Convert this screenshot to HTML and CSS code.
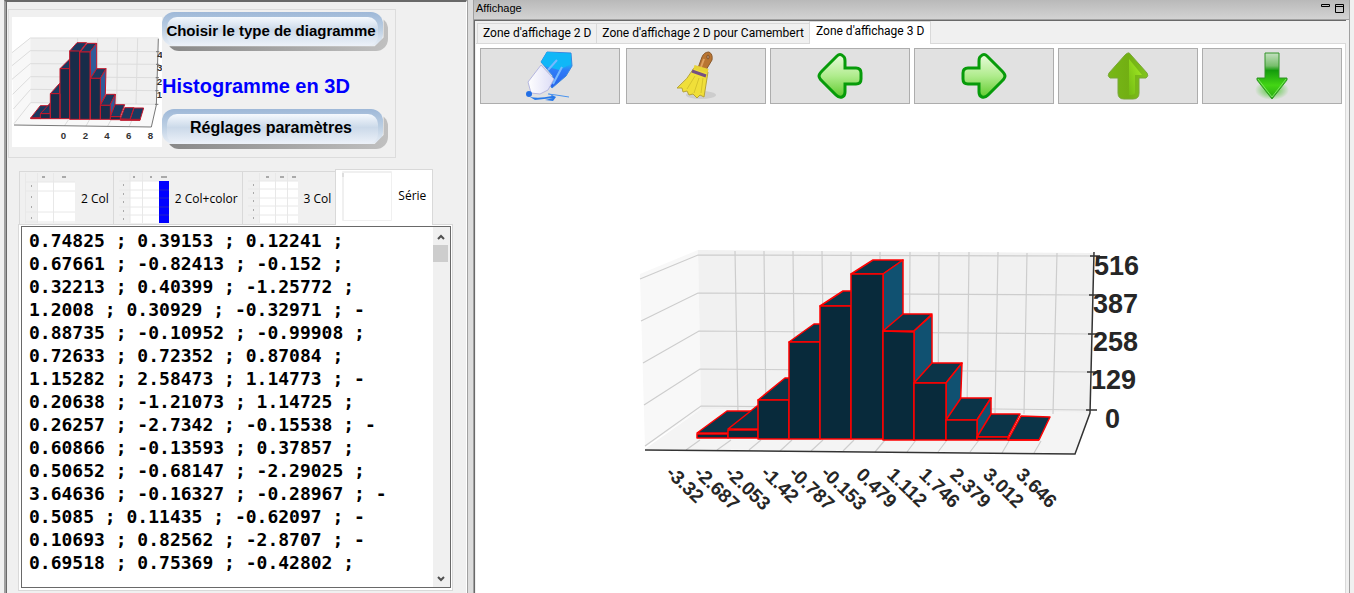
FILE: index.html
```html
<!DOCTYPE html>
<html lang="fr">
<head>
<meta charset="utf-8">
<title>Diagrammes</title>
<link rel="stylesheet" href="styles.css">
</head>
<body>
<div class="app">
  <aside class="side">
    <section class="chooser">
      <svg class="thumb" viewBox="36 51 450 390" aria-hidden="true">
        <rect x="36" y="51" width="450" height="390" fill="#fff"/>
        <path d="M36 158L91 114L92 310L42 374Z" fill="#f8f8f8"/>
        <path d="M91 114L475 117L469 315L92 310Z" fill="#f0f0f0"/>
        <path d="M92 310L469 315L454 380L42 374Z" fill="#f8f8f8"/>
        <path d="M36 158L91 114H475M36 197L91 152L474 155M36 238L91 191L473 193M38 283L92 230L471 233M40 327L92 268L470 272M42 371L92 308L469 313M233 115V310M293 115V310M353 115L350 310M413 115L408 312M205 360L193 378M268 360L258 378M333 360L323 378M396 360L388 378" fill="none" stroke="#ddd" stroke-width="3"/>
        <path d="M42 375L454 381L469 315L475 116M468 155H478M468 193H478M467 233H477M466 272H476M465 313H475" fill="none" stroke="#777" stroke-width="3"/>
        <g stroke="#c4182c" stroke-width="3" stroke-linejoin="round" fill="#1b395f">
          <path d="M92 354L121 317H150L122 354Z"/><path d="M121 341L150 310V341Z"/><path d="M151 281L179 250V281Z"/><path d="M180 206L209 177V206Z"/><path d="M209 153L231 128H260L239 155Z"/><path d="M240 156L262 130H290L270 156Z"/>
          <path d="M270 156L290 130V206L272 235Z" fill="#315b99"/>
          <path d="M272 235L290 206H318L301 235Z"/>
          <path d="M301 235L318 206L316 283L301 316Z" fill="#315b99"/>
          <path d="M301 316L319 283H346L330 316Z"/>
          <path d="M330 316L346 283L345 314L331 350Z" fill="#315b99"/>
          <path d="M331 350L345 314H374L360 350ZM361 357L374 323H402L390 358ZM390 359L402 324H431L420 360Z"/>
          <path d="M92 354H122V356H92ZM121 341H151V356H121ZM151 281H180V356H151ZM180 206H209V356H180ZM209 153H239V358H209ZM239 156H270V358H239ZM271 235H301V358H271ZM301 316H331V358H301ZM331 350H361V359H331ZM361 358H420V361H361Z" fill="#182c49"/>
        </g>
        <g class="thumb-text"><text x="182" y="417">0</text><text x="248" y="417">2</text><text x="313" y="417">4</text><text x="378" y="417">6</text><text x="443" y="417">8</text><text x="472" y="174">4</text><text x="471" y="214">3</text><text x="470" y="254">2</text><text x="470" y="293">1</text></g>
      </svg>
      <div class="choices">
        <button class="gloss" type="button">Choisir le type de diagramme</button>
        <h1>Histogramme en 3D</h1>
        <button class="gloss large" type="button">Réglages paramètres</button>
      </div>
    </section>

    <section class="data">
      <div class="data-tabs" role="tablist">
        <button class="data-tab" type="button" role="tab">
          <svg width="50" height="50" viewBox="0 0 50 50" aria-hidden="true"><path fill="#f0f0f0" d="M0 0h50v50H0z"/><path fill="#fff" d="M13 9h37v41H13z"/><path d="M0 9h50M0 18h50M0 39h50M0 49h50M12.500 0v50M28.500 0v50M.5 0v50" stroke="#e8e8e8"/><path d="M17 4h3M37 4h4M6 13h1M6 24h1M6 34h1M6 45h1" stroke="#aaa" stroke-width="2"/></svg>
          <span>2 Col</span></button>
        <button class="data-tab" type="button" role="tab">
          <svg width="50" height="50" viewBox="0 0 50 50" aria-hidden="true"><path fill="#f0f0f0" d="M0 0h50v50H0z"/><path fill="#fff" d="M11 8h30v42H11z"/><path fill="#00f" d="M40 8h10v42H40z"/><path d="M0 8h40M0 17h40M0 25h40M0 34h40M0 42h40M11 0v50M23.500 0v50" stroke="#e8e8e8"/><path d="M40 17h10M40 25h10M40 34h10M40 42h10" stroke="#22c"/><path d="M14 4h2M31 4h2M42 4h6M4 12h1M4 21h1M4 29h1M4 38h1M4 46h1" stroke="#aaa" stroke-width="2"/></svg>
          <span>2 Col+color</span></button>
        <button class="data-tab" type="button" role="tab">
          <svg width="50" height="50" viewBox="0 0 50 50" aria-hidden="true"><path fill="#f0f0f0" d="M0 0h50v50H0z"/><path fill="#fff" d="M12 8h38v42H12z"/><path d="M0 8h50M0 16h50M0 25h50M0 33h50M0 42h50M11.500 0v50M27.500 0v50M39.500 0v50" stroke="#e8e8e8"/><path d="M18 4h3M32 4h4M44 4h4M5 12h1M5 20h1M5 28h1M5 37h1M5 45h1" stroke="#aaa" stroke-width="2"/></svg>
          <span>3 Col</span></button>
        <button class="data-tab active" type="button" role="tab" aria-selected="true">
          <svg width="50" height="50" viewBox="0 0 50 50" aria-hidden="true"><path d="M.5.500h49v49H.5zM1 1.500h48M1.500 1v48" fill="#fff" stroke="#f0f0f0"/><path d="M1 2v4" stroke="#ccc"/></svg>
          <span>Série</span></button>
      </div>
      <div class="data-pane">
        <div class="editor">
          <textarea aria-label="Série" spellcheck="false" wrap="off">0.74825 ; 0.39153 ; 0.12241 ;
0.67661 ; -0.82413 ; -0.152 ;
0.32213 ; 0.40399 ; -1.25772 ;
1.2008 ; 0.30929 ; -0.32971 ; -
0.88735 ; -0.10952 ; -0.99908 ;
0.72633 ; 0.72352 ; 0.87084 ;
1.15282 ; 2.58473 ; 1.14773 ; -
0.20638 ; -1.21073 ; 1.14725 ;
0.26257 ; -2.7342 ; -0.15538 ; -
0.60866 ; -0.13593 ; 0.37857 ;
0.50652 ; -0.68147 ; -2.29025 ;
3.64636 ; -0.16327 ; -0.28967 ; -
0.5085 ; 0.11435 ; -0.62097 ; -
0.10693 ; 0.82562 ; -2.8707 ; -
0.69518 ; 0.75369 ; -0.42802 ;</textarea>
          <div class="scroll" aria-hidden="true">
            <svg width="16" height="18" viewBox="0 0 16 18"><path d="M5 12L8 9L11 12" fill="none" stroke="#505050" stroke-width="2"/></svg>
            <div class="scroll-thumb"></div>
            <svg class="scroll-end" width="16" height="17" viewBox="0 0 16 17"><path d="M5 7L8 10L11 7" fill="none" stroke="#505050" stroke-width="2"/></svg>
          </div>
        </div>
      </div>
    </section>
  </aside>

  <div class="splitter"></div>

  <main class="display">
    <header class="titlebar">
      <span>Affichage</span>
      <svg width="23" height="9" viewBox="0 0 23 9" aria-hidden="true"><path d="M.5.500h8v2h-8zM14.500.500h8v8h-8zM14.500 2.500h8" fill="none" stroke="#000"/></svg>
    </header>
    <div class="view">
      <div class="view-tabs" role="tablist">
        <button class="view-tab" type="button" role="tab">Zone d'affichage 2 D</button>
        <button class="view-tab" type="button" role="tab">Zone d'affichage 2 D pour Camembert</button>
        <button class="view-tab active" type="button" role="tab" aria-selected="true">Zone d'affichage 3 D</button>
      </div>
      <div class="view-pane">
        <div class="tools">
          <button class="tool first" type="button" aria-label="Dessiner">
            <svg width="50" height="52" viewBox="0 0 50 52"><defs><linearGradient id="pen" x1="0" y1="0" x2="0" y2="1"><stop offset="0" stop-color="#09b8fa"/><stop offset=".3" stop-color="#12bdf9"/><stop offset=".5" stop-color="#2f7df8"/><stop offset="1" stop-color="#2860ea"/></linearGradient><linearGradient id="nib"><stop offset="0" stop-color="#fff"/><stop offset="1" stop-color="#dcdcf6"/></linearGradient></defs>
            <path d="M22 2L46 3L47 16L41 26L27 38L24 34L28 26L16 12Z" fill="url(#pen)" stroke="#3988df"/><path d="M16 12L22 2L46 4L46 14L34 20L20 16Z" fill="#10b7f7"/><path d="M37 17L28 34M32 10L23 20" stroke="#76b9ff" stroke-width="2"/><path d="M16 15L29 29L23 40L15 44L6 43L3 32Z" fill="url(#nib)" stroke="#b4b6e0"/><circle cx="4" cy="44" r="3" fill="#216ee5"/><path d="M5 47Q14 49 27 46L23 43L31 47L28 51L20 50L28 48L10 50Z" fill="#2879e8"/><path d="M23 44L31 45L44 47" fill="none" stroke="#4a94ee"/></svg>
          </button>
          <button class="tool" type="button" aria-label="Effacer">
            <svg width="42" height="50" viewBox="0 0 42 50"><ellipse cx="26" cy="44" rx="15" ry="4" fill="#cdcdcd"/><path d="M27 6Q29 1 34 1Q38 3 37 9L31 19L23 17Z" fill="#b97532" stroke="#8a5a2d"/><path d="M29 8L26 16" stroke="#dfa15f" stroke-width="2"/><ellipse cx="33" cy="6" rx="1" ry="2" fill="#e9d9c7" stroke="#76441b"/><path d="M19 17L33 21L29 46L25 44L22 47L18 43L14 44L12 40L8 41L7 37L2 37Q13 28 19 17Z" fill="#f0df39" stroke="#b8a535"/><path d="M20 25L12 38M24 27L19 42M28 27L26 42" stroke="#d6c42d" stroke-width="1"/><path d="M17 20L31 25" stroke="#765083" stroke-width="3"/><path d="M19 16L33 20" stroke="#e7d336" stroke-width="4"/></svg>
          </button>
          <button class="tool" type="button" aria-label="Gauche">
            <svg width="46" height="46" viewBox="0 0 46 46"><defs><linearGradient id="leaf" x1="0" y1="0" x2="0" y2="1"><stop offset="0" stop-color="#e9fbdc"/><stop offset=".5" stop-color="#b0ec8d"/><stop offset="1" stop-color="#60cb2d"/></linearGradient></defs><path id="arrow" d="M2 23Q2 21 5 18L20 3Q23 0 26 3Q28 4 28 8V15H39Q44 15 44 20V26Q44 31 39 31H28V39Q28 43 25 44Q22 45 19 42L5 28Q2 25 2 23Z" fill="url(#leaf)" stroke="#079b0a" stroke-width="3"/></svg>
          </button>
          <button class="tool" type="button" aria-label="Droite">
            <svg width="46" height="46" viewBox="0 0 46 46"><use href="#arrow" transform="matrix(-1 0 0 1 46 0)"/></svg>
          </button>
          <button class="tool" type="button" aria-label="Haut">
            <svg width="42" height="48" viewBox="0 0 42 48"><defs><linearGradient id="up"><stop offset="0" stop-color="#78b817"/><stop offset=".5" stop-color="#72af13"/><stop offset="1" stop-color="#81c51d"/></linearGradient><linearGradient id="shine" x1="0" y1="1" x2="1" y2="0"><stop offset="0" stop-color="#73bb12"/><stop offset="1" stop-color="#a6ed25"/></linearGradient></defs><path d="M21 1Q22 0 24 3L40 21Q42 24 39 26H32V41Q32 47 26 47H17Q11 47 11 41V26H3Q0 24 2 21L18 3Q20 1 21 1Z" fill="url(#up)" stroke="#79a738"/><path d="M22 7L35 23H28V41Q27 43 22 43Z" fill="url(#shine)"/></svg>
          </button>
          <button class="tool" type="button" aria-label="Bas">
            <svg width="34" height="48" viewBox="0 0 34 48"><defs><linearGradient id="down" x1="0" y1="0" x2="0" y2="1"><stop offset="0" stop-color="#c4e0c0"/><stop offset=".28" stop-color="#77be6b"/><stop offset=".38" stop-color="#149b0c"/><stop offset=".7" stop-color="#43d514"/><stop offset="1" stop-color="#25a711"/></linearGradient><radialGradient id="glow"><stop offset="0" stop-color="#48c52d"/><stop offset="1" stop-color="#e1e1e1"/></radialGradient></defs><ellipse cx="17" cy="38" rx="17" ry="10" fill="url(#glow)"/><path d="M10 1H24V26H32V28L17 47L2 28V26H10Z" fill="url(#down)" stroke="#329428"/><path d="M3 27L17 45L31 27" fill="none" stroke="#7ce461"/></svg>
          </button>
        </div>
        <svg class="chart" viewBox="480 104 862 480" role="img" aria-label="Histogramme en 3D">
          <path d="M640 274L698 250L701 409L645 447Z" fill="#f8f8f8"/>
          <path d="M698 250L1094 253L1090 413L701 409Z" fill="#f1f1f1"/>
          <path d="M701 409L1090 413L1075 453L645 449Z" fill="#f4f4f4"/>
          <g fill="none" stroke="#cdcdcd" stroke-width="1.200">
            <path d="M640 279L698 255L1094 256M641 321L698 293L1093 295M643 363L699 331L1092 334M644 405L700 369L1091 372M645 446L701 406L1090 410"/>
            <path d="M735 251L738 413M764 251L766 413M793 251L795 413M822 251L824 413M851 252V413M880 252V413M910 252L909 413M939 252L938 413M969 252L967 413M998 252L995 413M1027 253L1024 414M1057 253L1053 414"/>
            <path d="M700 440L686 450M731 440L717 450M761 440L749 450M792 440L780 451M823 440L811 451M854 440L843 451M885 440L875 452M916 440L907 452M947 440L938 452M979 440L970 452M1009 441L1002 453M1041 441L1034 453"/>
          </g>
          <path d="M645 450L1075 454L1090 413L1094 252M1090 256H1100M1089 295H1099M1088 334H1098M1087 372H1098M1086 410H1097" fill="none" stroke="#333" stroke-width="1.500"/>
          <g class="bars">
            <path class="top" d="M697 433L727 411H757L728 433Z"/><path class="front" d="M697 434H728V438H697Z"/>
            <path class="top" d="M728 429L757 406H787L758 429Z"/><path class="front" d="M728 430H758V438H728Z"/>
            <path class="top" d="M758 400L785 378H815L789 400Z"/><path class="front" d="M758 400H789V439H758Z"/>
            <path class="top" d="M789 342L814 324H844L820 342Z"/><path class="front" d="M789 342H820V439H789Z"/>
            <path class="top" d="M820 306L843 291H873L851 306Z"/><path class="front" d="M820 306H851V439H820Z"/>
            <path class="top" d="M851 274L873 260H903L883 274Z"/><path class="right" d="M883 274L903 260V416L883 439Z"/><path class="front" d="M851 274H883V439H851Z"/>
            <path class="top" d="M883 331L903 314H932L914 331Z"/><path class="right" d="M914 331L932 315V416L914 440Z"/><path class="front" d="M883 331L914 332V440H883Z"/>
            <path class="top" d="M914 383L932 363H962L946 383Z"/><path class="right" d="M946 383L962 363L960 416L946 440Z"/><path class="front" d="M914 383H946V440H914Z"/>
            <path class="top" d="M946 420L961 398H991L977 420Z"/><path class="right" d="M977 420L991 398V415L977 439Z"/><path class="front" d="M946 420H977V440H946Z"/>
            <path class="top" d="M977 437L991 414H1020L1008 437Z"/><path class="front" d="M977 437H1008V440H977Z"/>
            <path class="top" d="M1008 440L1021 416L1050 417L1039 440Z"/><path class="front" d="M1008 440H1039"/>
          </g>
          <g class="axis-y"><text x="1094" y="275">516</text><text x="1093" y="313">387</text><text x="1093" y="351">258</text><text x="1091" y="389">129</text><text x="1105" y="428">0</text></g>
          <g class="axis-x">
            <text transform="translate(665 474) rotate(44)">-3.32</text>
            <text transform="translate(693 474) rotate(44)">-2.687</text>
            <text transform="translate(724 474) rotate(44)">-2.053</text>
            <text transform="translate(760 474) rotate(44)">-1.42</text>
            <text transform="translate(788 474) rotate(44)">-0.787</text>
            <text transform="translate(820 474) rotate(44)">-0.153</text>
            <text transform="translate(855 476) rotate(44)">0.479</text>
            <text transform="translate(886 476) rotate(44)">1.112</text>
            <text transform="translate(918 476) rotate(44)">1.746</text>
            <text transform="translate(949 476) rotate(44)">2.379</text>
            <text transform="translate(982 476) rotate(44)">3.012</text>
            <text transform="translate(1015 476) rotate(44)">3.646</text>
          </g>
        </svg>
      </div>
    </div>
  </main>
</div>
</body>
</html>
```
FILE: styles.css
```css
* { box-sizing: border-box; }
body { margin: 0; background: #f0f0f0; color: #000; font-family: "Open Sans", "Noto Sans", sans-serif; font-size: 12px; }
button { margin: 0; padding: 0; font: inherit; color: inherit; }
svg { display: block; flex: none; }
.app { display: flex; min-height: 100vh; padding: 0 4px; }

.side { flex: 0 0 463px; display: flex; flex-direction: column; border-left: 2px solid #a0a0a0; border-right: 1px solid #fff; padding: 7px 13px 2px 0; border-top: 2px solid #696969; box-shadow: inset 1px 0 #696969; }
.chooser { display: flex; width: 388px; height: 149px; margin-left: 2px; padding: 2px 3px; border: 1px solid #dcdcdc; }
.thumb { width: 150px; height: 130px; margin-top: 5px; }
.thumb-text text { font: bold 29px "Liberation Sans Narrow", "Liberation Sans", sans-serif; fill: #333; }
.choices { display: flex; flex-direction: column; align-items: flex-start; }
h1 { margin: 27px 0 10px; font: bold 20px/26px "Liberation Sans", Arial, sans-serif; color: #00f; white-space: nowrap; }
.gloss { position: relative; z-index: 0; width: 221px; height: 34px; padding: 2px 3px 0 0; border: 0; border-radius: 12px; background: linear-gradient(#9eb8d8, #bccfe3 50%, #e8eef6); font: bold 15px "Liberation Sans", Arial, sans-serif; white-space: nowrap; }
.gloss.large { height: 35px; padding: 3px 3px 0 0; font-size: 16px; }
.gloss::before { content: ""; position: absolute; z-index: -1; inset: 5px 5px 0; border-radius: 10px; background: linear-gradient(#f5f9fe, #cbd9e9 45%, #edf2f9); }
.gloss::after { content: ""; position: absolute; z-index: -3; inset: 5px -5px -5px 5px; border-radius: 12px; background: linear-gradient(90deg, #888, #c0c0c0); clip-path: polygon(0 86%, 94% 86%, 98% 60%, 98% 0, 100% 0, 100% 100%, 0 100%); }

.data { flex: 1; display: flex; flex-direction: column; margin: 11px 0 0 12px; }
.data-tabs { display: flex; align-items: flex-end; padding-left: 1px; height: 55px; }
.data-tab { display: flex; align-items: center; gap: 6px; height: 53px; padding: 0 4px 0 5px; border: 1px solid #d9d9d9; border-bottom: 0; border-right: 0; background: #f0f0f0; white-space: nowrap; }
.data-tab.active { position: relative; height: 56px; margin-bottom: -1px; padding: 0 6px 4px; border-right: 1px solid #d9d9d9; background: #fff; }
.data-pane { flex: 1; display: flex; padding: 1px 1px 2px 2px; border: 1px solid #d9d9d9; background: #fff; }
.editor { flex: 1; display: flex; min-width: 0; border: 1px solid #696969; background: #fff; }
textarea { flex: 1; min-width: 0; min-height: 352px; margin: 0; padding: 2px 0 0 7px; border: 0; outline: 0; resize: none; overflow: hidden; background: #fff; color: #000; font: bold 18px/23px "DejaVu Sans Mono", monospace; }
.scroll { flex: 0 0 17px; display: flex; flex-direction: column; padding-right: 1px; background: #f0f0f0; }
.scroll-thumb { width: 15px; height: 17px; background: #cdcdcd; }
.scroll-end { margin-top: auto; }

.splitter { flex: 0 0 6px; border-left: 1px solid #a0a0a0; background: #dcdcdc; }

.display { flex: 1; min-width: 0; display: flex; flex-direction: column; border-left: 1px solid #a0a0a0; border-right: 1px solid #a0a0a0; }
.titlebar { display: flex; justify-content: space-between; height: 20px; padding: 3px 5px 0 2px; background: linear-gradient(#b9b9b9, #d3d3d3); border-bottom: 1px solid #a0a0a0; font: 11px/11px "Liberation Sans", Arial, sans-serif; }
.titlebar svg { margin-top: 1px; }
.view { flex: 1; display: flex; flex-direction: column; margin-right: 3px; border-top: 1px solid #696969; border-left: 1px solid #696969; padding-left: 1px; }
.view-tabs { display: flex; align-items: flex-end; height: 22px; padding-left: 1px; font-family: Roboto, "Open Sans", sans-serif; }
.view-tab { height: 20px; padding: 0 5px; border: 1px solid #d9d9d9; border-width: 1px 0 0 1px; background: #f0f0f0; line-height: 19px; white-space: nowrap; }
.view-tab.active { position: relative; height: 23px; margin-bottom: -1px; padding: 0 6px 3px; border-right-width: 1px; background: #fff; }
.view-pane { flex: 1; padding: 4px 3px 0 4px; border: 1px solid #d9d9d9; border-width: 1px 1px 0 0; background: #fff; }
.tools { display: flex; gap: 4px; }
.tool { flex: 1; display: flex; align-items: center; justify-content: center; height: 56px; border: 1px solid #adadad; background: #e1e1e1; }
.tool.first { margin-right: 2px; }
.chart { width: 100%; height: auto; }
.bars { stroke: #f00; stroke-width: 1.500; stroke-linejoin: round; }
.top { fill: #0b3448; }
.front { fill: #082a3b; }
.right { fill: #105171; }
.axis-y text { font: bold 27px "Liberation Sans", Arial, sans-serif; fill: #262626; }
.axis-x text { font: bold 19px "Liberation Sans", Arial, sans-serif; fill: #262626; }
```
